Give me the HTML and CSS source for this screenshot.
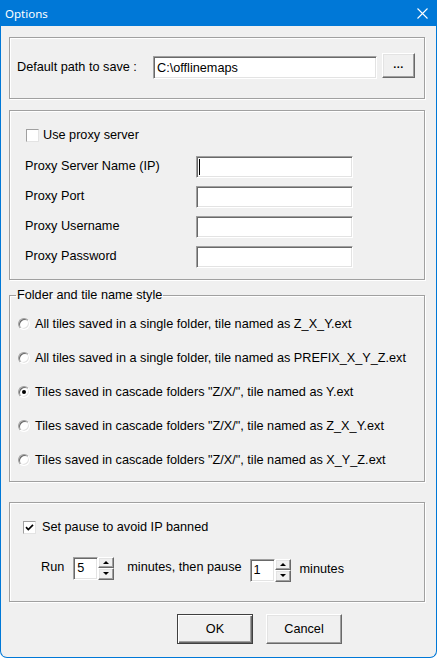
FILE: index.html
```html
<!DOCTYPE html>
<html>
<head>
<meta charset="utf-8">
<title>Options</title>
<link rel="stylesheet" href="styles.css">
</head>
<body>
<div class="window">
  <div class="titlebar">
    <span class="title">Options</span>
    <svg class="close" width="11" height="11" viewBox="0 0 11 11"><path d="M0.5 0.5L10.5 10.5M10.5 0.5L0.5 10.5" stroke="#ffffff" stroke-width="1.1" fill="none"/></svg>
  </div>
  <div class="client">
    <div class="group g-path">
      <span class="path-label">Default path to save :</span>
      <div class="edit path-edit">C:\offlinemaps</div>
      <div class="btn browse">...</div>
    </div>

    <div class="group g-proxy">
      <div class="check-row proxy-check"><span class="checkbox"></span><span>Use proxy server</span></div>
      <div class="field-row"><span class="field-label">Proxy Server Name (IP)</span><div class="edit field-edit"><span class="caret"></span></div></div>
      <div class="field-row"><span class="field-label">Proxy Port</span><div class="edit field-edit"></div></div>
      <div class="field-row"><span class="field-label">Proxy Username</span><div class="edit field-edit"></div></div>
      <div class="field-row"><span class="field-label">Proxy Password</span><div class="edit field-edit"></div></div>
    </div>

    <fieldset class="group g-style">
      <legend>Folder and tile name style</legend>
      <div class="radio-row"><span class="radio"></span><span>All tiles saved in a single folder, tile named as Z_X_Y.ext</span></div>
      <div class="radio-row"><span class="radio"></span><span>All tiles saved in a single folder, tile named as PREFIX_X_Y_Z.ext</span></div>
      <div class="radio-row"><span class="radio on"></span><span>Tiles saved in cascade folders "Z/X/", tile named as Y.ext</span></div>
      <div class="radio-row"><span class="radio"></span><span>Tiles saved in cascade folders "Z/X/", tile named as Z_X_Y.ext</span></div>
      <div class="radio-row"><span class="radio"></span><span>Tiles saved in cascade folders "Z/X/", tile named as X_Y_Z.ext</span></div>
    </fieldset>

    <div class="group g-pause">
      <div class="check-row pause-check"><span class="checkbox"><svg width="9" height="9" viewBox="0 0 9 9"><path d="M1 4.2L3.3 6.5L8 1.8" stroke="#000" stroke-width="1.7" fill="none"/></svg></span><span>Set pause to avoid IP banned</span></div>
      <div class="spin-row">
        <span class="run-label">Run</span>
        <div class="spin">
          <div class="edit spin-edit">5</div>
          <div class="spin-btns">
            <div class="btn spin-btn"><span class="tri-up"></span></div>
            <div class="btn spin-btn"><span class="tri-down"></span></div>
          </div>
        </div>
        <span class="mid-label">minutes, then pause</span>
        <div class="spin spin-low">
          <div class="edit spin-edit">1</div>
          <div class="spin-btns">
            <div class="btn spin-btn"><span class="tri-up"></span></div>
            <div class="btn spin-btn"><span class="tri-down"></span></div>
          </div>
        </div>
        <span class="end-label">minutes</span>
      </div>
    </div>

    <div class="buttons">
      <div class="btn push default">OK</div>
      <div class="btn push">Cancel</div>
    </div>
  </div>
</div>
</body>
</html>
```

FILE: styles.css
```css
* { box-sizing: border-box; }

html, body {
  margin: 0;
  padding: 0;
  background: #ffffff;
}

body {
  font-family: "Liberation Sans", Arial, sans-serif;
  font-size: 12.7px;
  color: #000;
}

.window {
  width: 437px;
  height: 658px;
  background: #f0f0f0;
  border: 1px solid #0078d7;
  border-top: 0;
  border-radius: 0 0 7px 7px;
  display: flex;
  flex-direction: column;
  overflow: hidden;
}

.titlebar {
  height: 26px;
  background: #0078d7;
  display: flex;
  align-items: center;
  justify-content: space-between;
  padding: 0 8px 0 4px;
  flex: none;
}

.title {
  color: #fff;
  font-family: "Noto Sans", "Liberation Sans", sans-serif;
  font-size: 11.5px;
  line-height: 16px;
  margin-top: 1px;
}

.close {
  display: block;
  margin-top: 1px;
}

.client {
  padding: 11px 0 0 8px;
  display: flex;
  flex-direction: column;
}

.group {
  width: 416px;
  border: 1px solid #a0a0a0;
  box-shadow: 1px 1px 0 #ffffff, inset 1px 1px 0 #ffffff;
  margin: 0;
}

/* sunken edit */
.edit {
  background: #fff;
  border: 1px solid;
  border-color: #a0a0a0 #ffffff #ffffff #a0a0a0;
  box-shadow: inset 1px 1px 0 #696969, inset -1px -1px 0 #e3e3e3;
  padding: 0 0 0 3px;
  display: flex;
  align-items: center;
  white-space: nowrap;
}

/* raised button */
.btn {
  background: #f0f0f0;
  border: 1px solid;
  border-color: #ffffff #696969 #696969 #ffffff;
  box-shadow: inset -1px -1px 0 #a0a0a0, inset 1px 1px 0 #e3e3e3;
  display: flex;
  align-items: center;
  justify-content: center;
}

/* group 1 */
.g-path {
  height: 62px;
  display: flex;
  align-items: center;
  padding: 0 0 3px 7px;
}

.path-label {
  width: 136px;
  flex: none;
}

.path-edit {
  width: 224px;
  height: 23px;
  margin-top: 2px;
}

.browse {
  width: 33px;
  height: 25px;
  margin-left: 5px;
  font-weight: bold;
  font-size: 11px;
  letter-spacing: 0.5px;
  padding-bottom: 3px;
  margin-top: -2px;
}

/* group 2 */
.g-proxy {
  height: 170px;
  margin-top: 11px;
  padding: 14px 0 0 15px;
}

.check-row {
  height: 20px;
  display: flex;
  align-items: center;
}

.checkbox {
  width: 13px;
  height: 13px;
  flex: none;
  background: #fff;
  border: 1px solid;
  border-color: #a0a0a0 #e3e3e3 #e3e3e3 #a0a0a0;
  display: flex;
  align-items: center;
  justify-content: center;
}

.checkbox svg { display: block; }

.proxy-check .checkbox {
  margin: 0 4px 0 1px;
}

.field-row {
  height: 30px;
  display: flex;
  align-items: center;
}

.proxy-check + .field-row { margin-top: 7px; }

.field-label {
  width: 171px;
  flex: none;
  margin-top: -3px;
}

.field-edit {
  width: 157px;
  height: 22px;
}

.caret {
  width: 1px;
  height: 16px;
  background: #000;
  margin-left: -1px;
}

/* group 3 */
.g-style {
  margin-top: 7px;
  padding: 4px 0 4px 8px;
}

.g-style legend {
  padding: 0 1px;
  margin-left: -2px;
  line-height: 16px;
}

.radio-row {
  height: 34px;
  display: flex;
  align-items: center;
}

.radio {
  width: 12px;
  height: 12px;
  flex: none;
  border-radius: 50%;
  background: #fff;
  border: 1px solid;
  border-color: #a0a0a0 #ffffff #ffffff #a0a0a0;
  box-shadow: inset 1px 1px 0 #696969, inset -1px -1px 0 #e3e3e3;
  margin-right: 5px;
  display: flex;
  align-items: center;
  justify-content: center;
}

.radio.on::after {
  content: "";
  width: 4px;
  height: 4px;
  border-radius: 50%;
  background: #000;
}

/* group 4 */
.g-pause {
  height: 100px;
  margin-top: 20px;
  padding: 14px 0 0 13px;
}

.pause-check .checkbox {
  margin-right: 6px;
}

.spin-row {
  height: 24px;
  margin-top: 19px;
  display: flex;
  align-items: center;
  padding-left: 18px;
}

.run-label { margin-right: 9px; margin-top: -2px; }
.mid-label { margin: 0 8px 0 13px; margin-top: -2px; }
.end-label { margin-left: 9px; margin-top: 2px; }

.spin {
  display: flex;
  height: 23px;
}

.spin-low { margin-top: 4px; }

.spin-edit {
  width: 25px;
  height: 23px;
}

.spin-btns {
  width: 16px;
  display: flex;
  flex-direction: column;
}

.spin-btn {
  height: 11.5px;
}

.tri-up, .tri-down {
  width: 0;
  height: 0;
  border-left: 3px solid transparent;
  border-right: 3px solid transparent;
}

.tri-up { border-bottom: 3px solid #000; }
.tri-down { border-top: 3px solid #000; }

/* buttons */
.buttons {
  margin-top: 12px;
  padding-left: 168px;
  display: flex;
  gap: 13px;
}

.push {
  width: 76px;
  height: 30px;
}

.push.default {
  border-color: #404040;
  box-shadow: inset 1px 1px 0 #ffffff, inset -1px -1px 0 #696969, inset -2px -2px 0 #a0a0a0;
}
```
